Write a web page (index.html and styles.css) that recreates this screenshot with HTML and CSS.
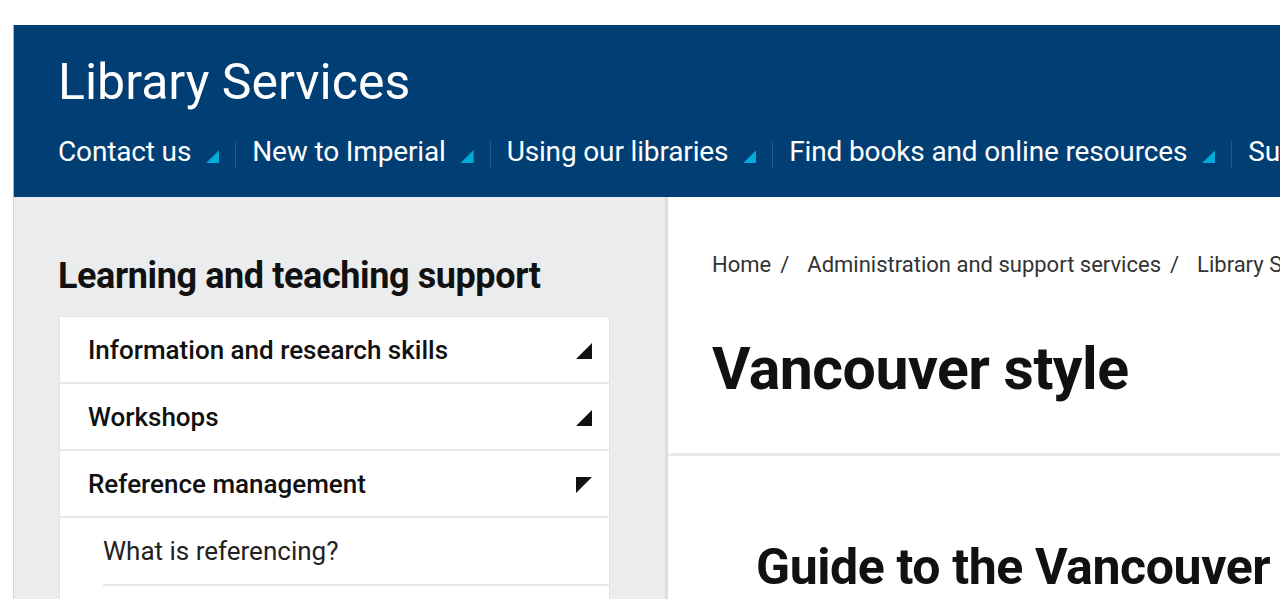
FILE: index.html
```html
<!DOCTYPE html>
<html lang="en">
<head>
<meta charset="utf-8">
<title>Vancouver style | Library Services</title>
<link rel="stylesheet" href="styles.css">
</head>
<body>
<div class="page">
  <header class="site-header">
    <div class="site-title">Library Services</div>
    <nav class="main-nav">
      <a class="nav-item">Contact us<span class="nav-tri"></span></a>
      <span class="nav-sep"></span>
      <a class="nav-item">New to Imperial<span class="nav-tri"></span></a>
      <span class="nav-sep"></span>
      <a class="nav-item">Using our libraries<span class="nav-tri"></span></a>
      <span class="nav-sep"></span>
      <a class="nav-item">Find books and online resources<span class="nav-tri"></span></a>
      <span class="nav-sep"></span>
      <a class="nav-item">Support for research<span class="nav-tri"></span></a>
    </nav>
  </header>
  <div class="body-row">
    <aside class="sidebar">
      <h2 class="side-title">Learning and teaching support</h2>
      <ul class="side-menu">
        <li class="side-item"><span>Information and research skills</span><span class="tri tri-closed"></span></li>
        <li class="side-item"><span>Workshops</span><span class="tri tri-closed"></span></li>
        <li class="side-item"><span>Reference management</span><span class="tri tri-open"></span></li>
        <li class="side-sub"><span class="sub-link">What is referencing?</span></li>
      </ul>
    </aside>
    <main class="content">
      <div class="content-head">
        <div class="breadcrumb"><span>Home</span><span class="crumb-sep">/</span><span>Administration and support services</span><span class="crumb-sep">/</span><span>Library Services</span></div>
        <h1 class="page-title">Vancouver style</h1>
      </div>
      <section class="content-body">
        <h2 class="section-title">Guide to the Vancouver style</h2>
      </section>
    </main>
  </div>
</div>
</body>
</html>
```
FILE: styles.css
```css
html, body {
  margin: 0;
  padding: 0;
  background: #ffffff;
  overflow: hidden;
}
body {
  font-family: Roboto, "Open Sans", "Liberation Sans", sans-serif;
  color: #111;
}
.page {
  padding: 25px 0 0 14px;
}
.site-header {
  background: #003e74;
  color: #fff;
  padding: 27px 0 25px 44px;
  box-shadow: -1px 0 0 #9fb3c8;
}
.site-title {
  font-size: 50px;
  line-height: 60px;
  font-weight: 400;
  white-space: nowrap;
}
.main-nav {
  margin-top: 20px;
  display: flex;
  align-items: center;
  white-space: nowrap;
  height: 40px;
}
.nav-item {
  font-size: 28px;
  line-height: 40px;
  letter-spacing: -0.15px;
  display: flex;
  align-items: baseline;
}
.nav-tri {
  display: inline-block;
  width: 13px;
  height: 13px;
  margin-left: 15px;
  background: #00acd7;
  clip-path: polygon(100% 0, 100% 100%, 0 100%);
  position: relative;
  top: 2px;
}
.nav-sep {
  width: 1px;
  height: 28px;
  background: #1f5890;
  margin: 6px 16px 0 16px;
  flex: none;
}
.body-row {
  display: flex;
  align-items: stretch;
  min-height: 420px;
}
.sidebar {
  width: 651px;
  flex: none;
  background: #ebeced;
  border-right: 3px solid #dcdedf;
  box-shadow: -1px 0 0 #d3d6d8;
  padding-top: 57px;
}
.side-title {
  margin: 0 0 18px 44px;
  font-size: 36px;
  line-height: 44px;
  font-weight: 700;
  color: #111;
  letter-spacing: -0.4px;
}
.side-menu {
  list-style: none;
  margin: 0 0 0 45px;
  padding: 0 0 40px 0;
  width: 549px;
  background: #fff;
  border: 1px solid #e0e2e3;
  border-bottom: none;
  border-radius: 2px 2px 0 0;
}
.side-item {
  display: flex;
  align-items: center;
  justify-content: space-between;
  padding: 20px 17px 19px 28px;
  font-size: 26px;
  line-height: 26px;
  font-weight: 500;
  color: #111;
  border-bottom: 2px solid #e6e8e9;
}
.tri {
  width: 16px;
  height: 16px;
  background: #111;
  flex: none;
}
.tri-closed {
  clip-path: polygon(100% 0, 100% 100%, 0 100%);
  margin-top: 2px;
}
.tri-open {
  clip-path: polygon(0 0, 100% 0, 0 100%);
  margin-top: 2px;
}
.side-sub {
  margin-left: 43px;
  padding: 20px 0 20px 0;
  font-size: 26px;
  line-height: 26px;
  font-weight: 400;
  color: #222;
  border-bottom: 2px solid #e6e8e9;
}
.content {
  flex: 1;
  min-width: 0;
  background: #fff;
}
.content-head {
  padding: 53px 0 48px 44px;
  border-bottom: 3px solid #e8eaeb;
}
.breadcrumb {
  font-size: 22px;
  line-height: 30px;
  color: #333;
  white-space: nowrap;
  overflow: hidden;
}
.crumb-sep {
  margin: 0 18px 0 9px;
}
.page-title {
  margin: 53px 0 0 0;
  font-size: 59px;
  line-height: 72px;
  font-weight: 700;
  color: #111;
  letter-spacing: -0.5px;
  white-space: nowrap;
}
.content-body {
  padding: 81px 0 0 88px;
}
.section-title {
  margin: 0;
  font-size: 50px;
  line-height: 60px;
  font-weight: 700;
  color: #111;
  white-space: nowrap;
  letter-spacing: -0.4px;
}
```
